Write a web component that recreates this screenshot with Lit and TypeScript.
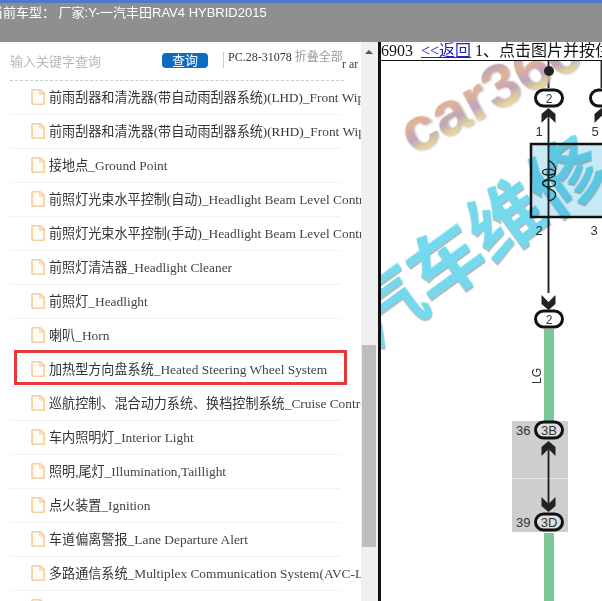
import { LitElement, html, css, svg } from "lit";
import { customElement } from "lit/decorators.js";

const ROWS = [
  ["前雨刮器和清洗器(带自动雨刮器系统)(LHD)", "_Front Wiper and Washer"],
  ["前雨刮器和清洗器(带自动雨刮器系统)(RHD)", "_Front Wiper and Washer"],
  ["接地点", "_Ground Point"],
  ["前照灯光束水平控制(自动)", "_Headlight Beam Level Control"],
  ["前照灯光束水平控制(手动)", "_Headlight Beam Level Control"],
  ["前照灯清洁器", "_Headlight Cleaner"],
  ["前照灯", "_Headlight"],
  ["喇叭", "_Horn"],
  ["加热型方向盘系统", "_Heated Steering Wheel System"],
  ["巡航控制、混合动力系统、换档控制系统", "_Cruise Control"],
  ["车内照明灯", "_Interior Light"],
  ["照明,尾灯", "_Illumination,Taillight"],
  ["点火装置", "_Ignition"],
  ["车道偏离警报", "_Lane Departure Alert"],
  ["多路通信系统", "_Multiplex Communication System(AVC-LAN)"],
  ["", ""],
];

const fileIcon = html`<svg class="file" viewBox="0 0 14 16" width="14" height="16">
  <path d="M1 1.6 a1 1 0 0 1 1-1 H9 L13.2 4.6 V14.4 a1 1 0 0 1 -1 1 H2 a1 1 0 0 1 -1 -1 Z" fill="#fffcf5" stroke="#f5d0a0" stroke-width="1.8"/>
  <path d="M8.8 .8 V4.8 H13" fill="none" stroke="#f5d0a0" stroke-width="1.3"/>
</svg>`;

const oval = (cx: number, cy: number, label: string, fs = 12) => svg`
  <rect x=${cx - 13.5} y=${cy - 8} width="27" height="16" rx="8" fill="#fff" fill-opacity="0.35" stroke="#111" stroke-width="3"/>
  <text x=${cx} y=${cy + 4.5} text-anchor="middle" class="num" font-size=${fs}>${label}</text>`;

const arrowDown = (x: number, tip: number) => svg`
  <path d="M${x - 7} ${tip - 15} L${x} ${tip - 8} L${x + 7} ${tip - 15} L${x + 7} ${tip - 6} L${x} ${tip} L${x - 7} ${tip - 6} Z" fill="#222"/>`;
const arrowUp = (x: number, tip: number) => svg`
  <path d="M${x - 7} ${tip + 15} L${x} ${tip + 8} L${x + 7} ${tip + 15} L${x + 7} ${tip + 6} L${x} ${tip} L${x - 7} ${tip + 6} Z" fill="#222"/>`;

@customElement("app-root")
export class AppRoot extends LitElement {
  static styles = css`
    :host { display: block; width: 602px; height: 601px; overflow: hidden; background: #fff; font-family: "Liberation Serif", "Noto Sans CJK SC", serif; }
    .top { height: 42px; box-sizing: border-box; background: #8f8f8f; border-top: 3px solid #4f78cf; overflow: hidden; }
    .car { margin: 1px 0 0 -10px; font: 13px/17px "Liberation Sans", "Noto Sans CJK SC", sans-serif; color: #fff; white-space: nowrap; }
    .main { display: flex; height: 559px; }
    .side { width: 361px; position: relative; overflow: hidden; flex: none; }
    .search { height: 38px; margin: 0 17px 0 10px; border-bottom: 1px dashed #ccc; display: flex; align-items: flex-start; }
    .ph { font-size: 13px; color: #b9b9b9; margin-top: 12px; width: 152px; line-height: 16px; }
    .btn { background: #0a6cc4; color: #fff; font-size: 13px; width: 46px; height: 15px; line-height: 15px; border-radius: 4px; text-align: center; margin-top: 11px; }
    .sep { border-left: 1px solid #ccc; height: 16px; margin: 10px 4px 0 15px; }
    .pc { font-size: 12px; line-height: 16px; margin-top: 7px; color: #333; white-space: nowrap; }
    .pc span { color: #999; }
    .frag { position: absolute; left: 342px; top: 15px; font-size: 12px; color: #444; }
    .row { height: 31px; padding: 0 0 2px 21px; margin: 0 21px 0 10px; border-bottom: 1px solid #f2f2f2; display: flex; align-items: center; white-space: nowrap; font-size: 13.1px; color: #333; width: 309px; }
    .file { flex: none; margin-right: 4px; }
    .en { font-size: 13.4px; color: #444; }
    .red { position: absolute; left: 14px; top: 308px; width: 327px; height: 29px; border: 3px solid #e5393b; }
    .bar { width: 17px; flex: none; background: #f0f0f0; position: relative; }
    .up { position: absolute; left: 4px; top: 8px; width: 0; height: 0; border-left: 4px solid transparent; border-right: 4px solid transparent; border-bottom: 4px solid #555; }
    .thumb { position: absolute; left: 1px; top: 303px; width: 14px; height: 202px; background: #bdbdbd; }
    .right { flex: 1; border-left: 3px solid #111; min-width: 0; display: flex; flex-direction: column; overflow: hidden; }
    .head { height: 18px; border-bottom: 1px solid #111; font-size: 16px; line-height: 18px; white-space: nowrap; color: #111; flex: none; }
    .head a { color: #2222bb; text-decoration: underline; margin: 0 4px 0 8px; }
    .dia { display: block; flex: 1; }
    .num { font-family: "Liberation Sans", sans-serif; fill: #333; }
    .wm1 { font-family: "Liberation Sans", sans-serif; font-weight: 700; filter: drop-shadow(1px 1px 1px #aaa); opacity: 0.85; }
    .wm2 { font-family: "Noto Sans CJK SC", sans-serif; font-weight: 700; fill: #74d9ec; mix-blend-mode: multiply; filter: drop-shadow(-1px 2px 0 #aebabd); }
  `;

  render() {
    return html`
      <div class="top"><div class="car">当前车型： 厂家:Y-一汽丰田RAV4 HYBRID2015</div></div>
      <div class="main">
        <div class="side">
          <div class="search">
            <div class="ph">输入关键字查询</div>
            <div class="btn">查询</div>
            <div class="sep"></div>
            <div class="pc">PC.28-31078 <span>折叠全部</span></div>
          </div>
          <div class="frag">r ar</div>
          ${ROWS.map(([cn, en]) => html`<div class="row">${fileIcon}<span>${cn}<span class="en">${en}</span></span></div>`)}
          <div class="red"></div>
        </div>
        <div class="bar"><div class="up"></div><div class="thumb"></div></div>
        <div class="right">
          <div class="head">6903<a>&lt;&lt;返回</a>1、点击图片并按住拖动</div>
          <svg class="dia" viewBox="381 61 221 540" width="221" height="540">
            <defs>
              <linearGradient id="wg" x1="0" y1="0" x2="0" y2="1">
                <stop offset="0.15" stop-color="#a893b4"/>
                <stop offset="0.4" stop-color="#e0a480"/>
                <stop offset="0.62" stop-color="#b595b0"/>
                <stop offset="0.85" stop-color="#f0e27a"/>
              </linearGradient>
            </defs>
            <rect x="530" y="143" width="80" height="74" fill="#c8eaf6"/>
            <path d="M548.5 61 V88 M548.5 110 V293 M601.5 61 V88" stroke="#222" stroke-width="1.9" fill="none"/>
            <rect x="531" y="144" width="80" height="73" fill="none" stroke="#111" stroke-width="2.5"/>
            <path d="M548.5 160 c6 4 8 8 7 12 c-1 4 -13 4 -13 0 c0 -4 12 -4 13 1 c1 5 -13 6 -13 10 c0 5 13 5 13 0 c0 -4 -12 -3 -13 0 c2 6 14 6 13 12 c0 3 -3 5 -7 6" fill="none" stroke="#222" stroke-width="1.3"/>
            <text class="wm1" transform="translate(413 155.5) rotate(-28)" font-size="62" fill="url(#wg)">car360</text>
            <circle cx="549" cy="71" r="5" fill="#222"/>
            ${oval(549, 98, "2")} ${oval(604, 98, "")}
            ${arrowUp(548.5, 108)} ${arrowUp(601.5, 108)} ${arrowDown(548.5, 310)}
            <g class="num" font-size="13" text-anchor="middle">
              <text x="539" y="136">1</text><text x="595" y="136">5</text>
              <text x="539" y="235">2</text><text x="594" y="235">3</text>
            </g>
            <text class="wm2" transform="translate(476 241) rotate(-36)" y="27" text-anchor="middle" font-size="74">汽车维修</text>
            ${oval(549, 319, "2")}
            <rect x="544" y="329" width="10" height="92" fill="#7cc799"/>
            <text class="num" transform="translate(541 384) rotate(-90)" font-size="12">LG</text>
            <rect x="512" y="421" width="56" height="111" fill="#ccced0"/>
            <rect x="512" y="478" width="56" height="1" fill="#e6e6e6"/>
            <path d="M548.5 445 V510" stroke="#222" stroke-width="1.9"/>
            ${arrowUp(548.5, 441)} ${arrowDown(548.5, 512)}
            ${oval(549, 430, "3B", 13)} ${oval(549, 522, "3D", 13)}
            <text class="num" x="516" y="435" font-size="13">36</text>
            <text class="num" x="516" y="527" font-size="13">39</text>
            <rect x="544" y="533" width="10" height="68" fill="#7cc799"/>
          </svg>
        </div>
      </div>
    `;
  }
}
